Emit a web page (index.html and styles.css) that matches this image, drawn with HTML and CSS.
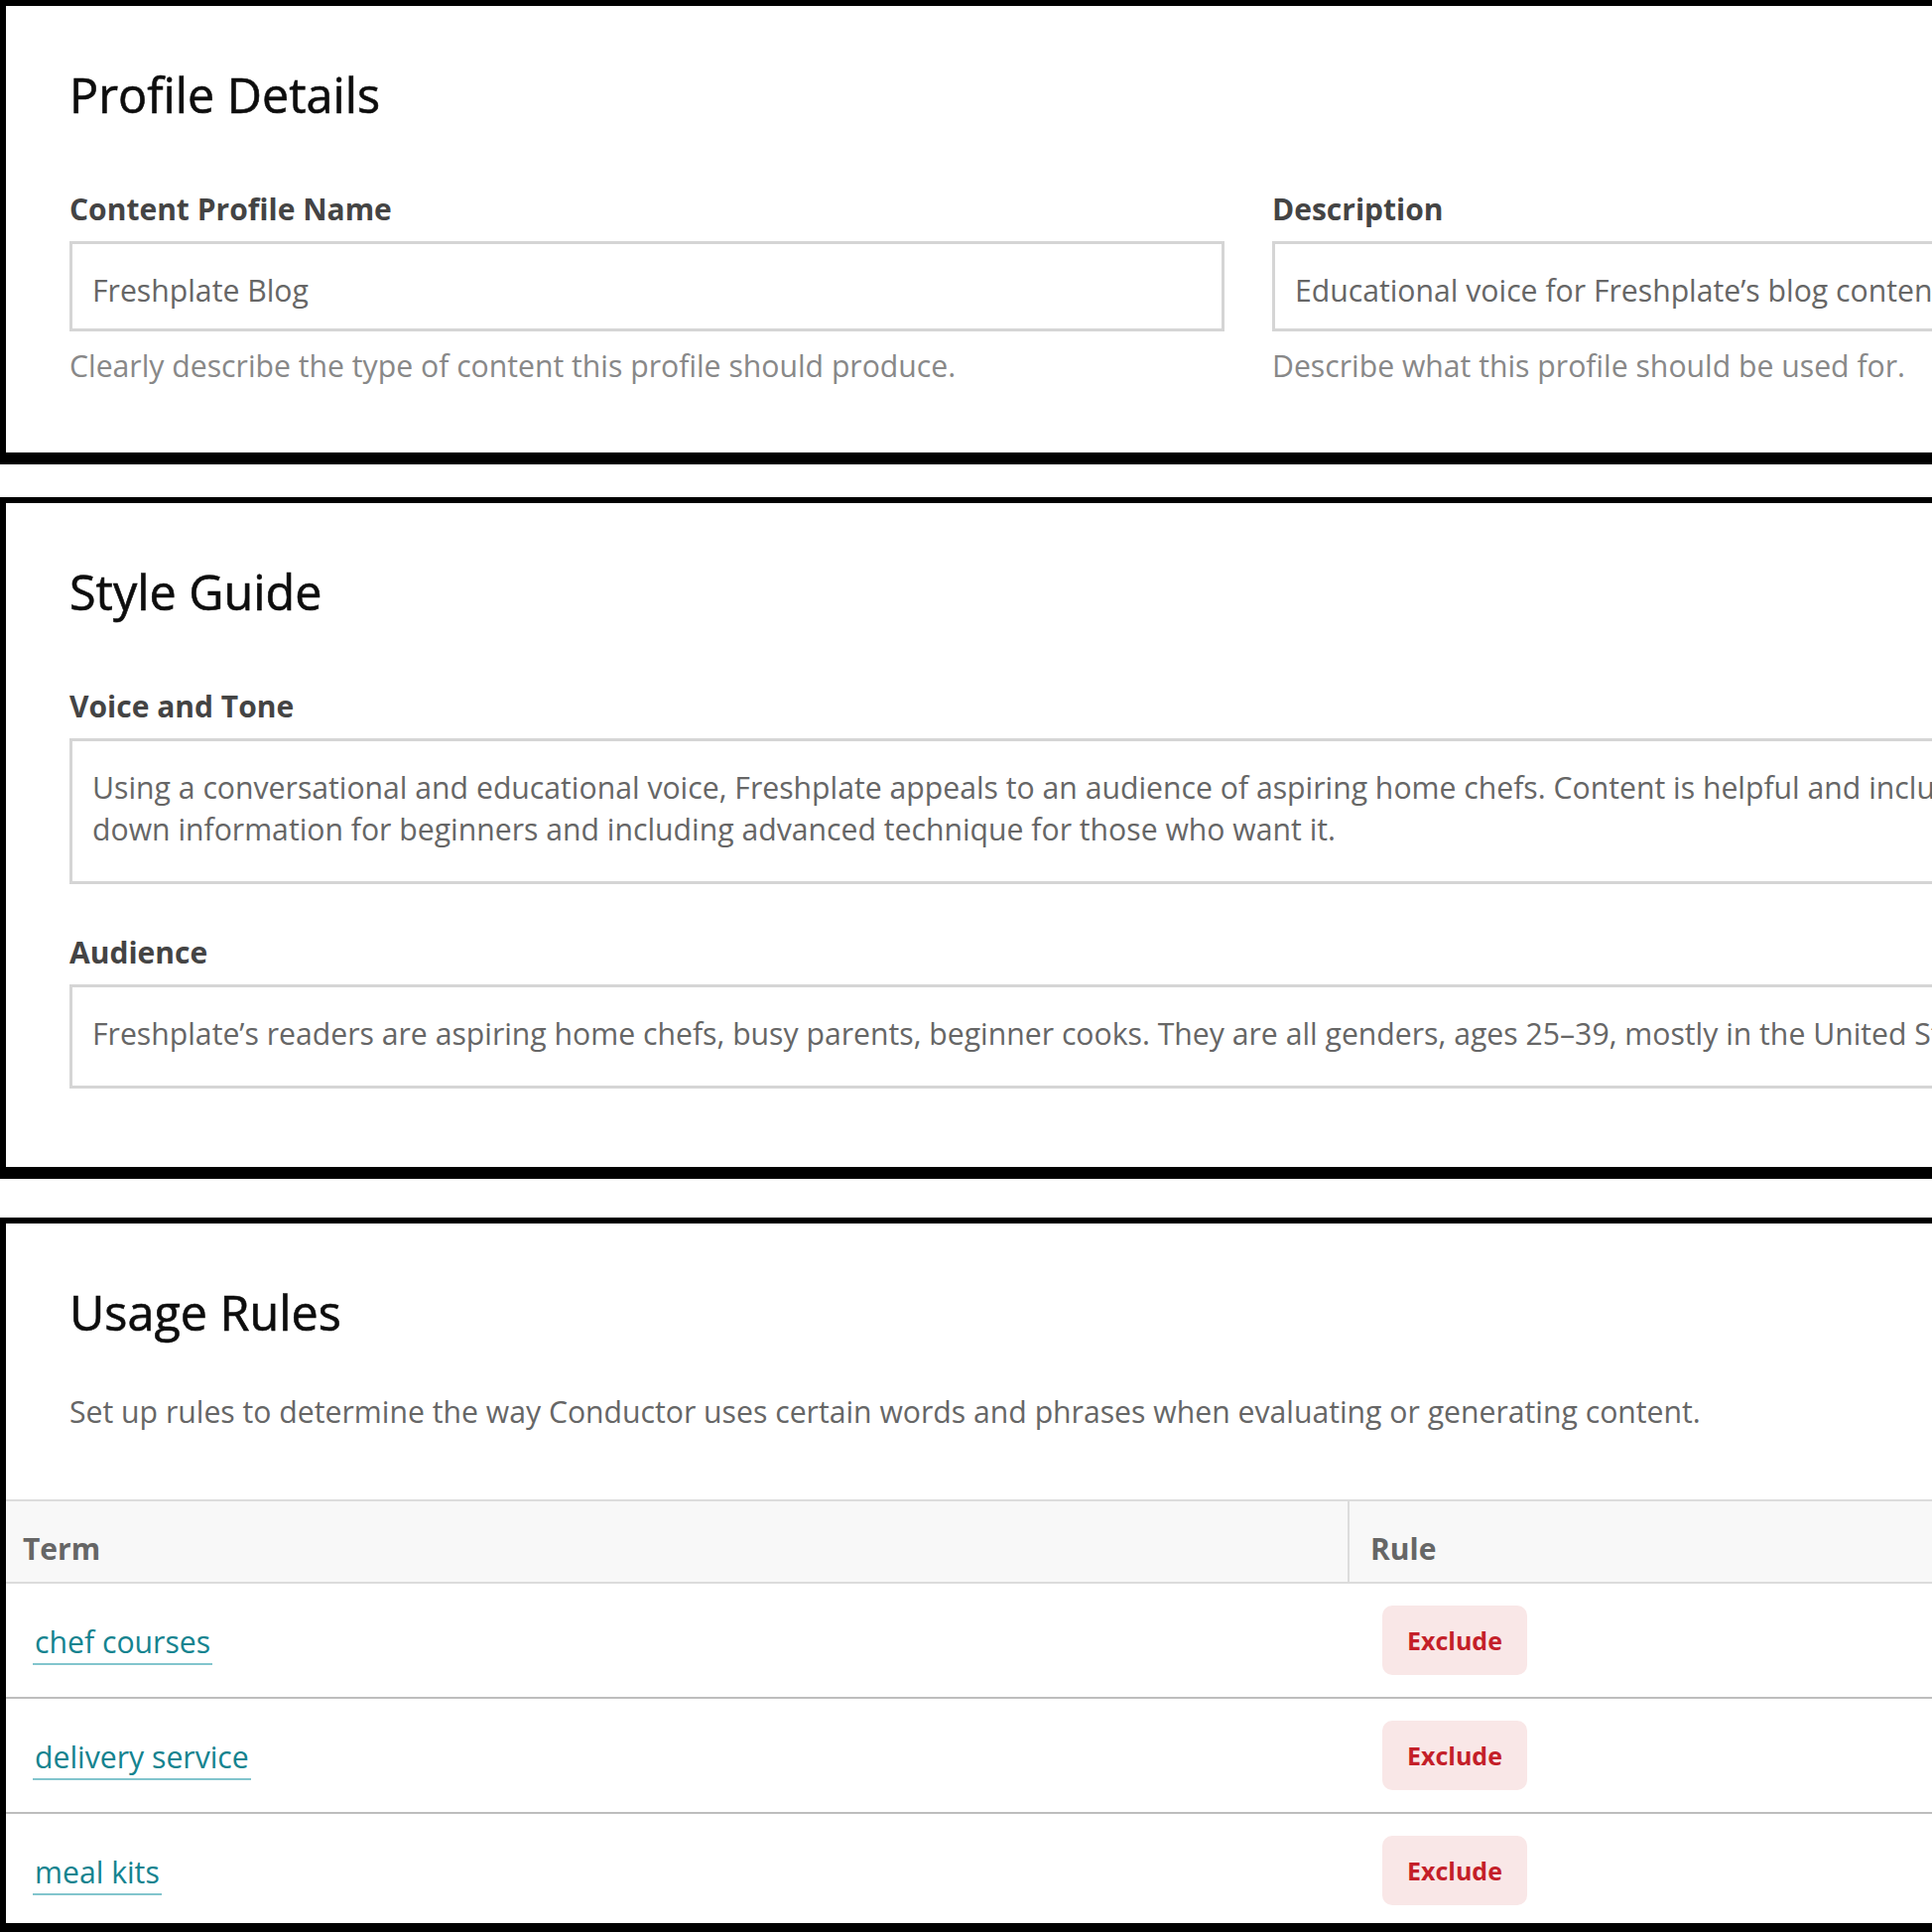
FILE: index.html
```html
<!DOCTYPE html>
<html lang="en">
<head>
<meta charset="utf-8">
<title>Content Profile</title>
<link rel="stylesheet" href="styles.css">
</head>
<body>
<div class="page">
  <section class="card card-profile">
    <div class="card-body">
      <h2 class="card-title">Profile Details</h2>
      <div class="field-row">
        <div class="field">
          <label class="field-label">Content Profile Name</label>
          <div class="input">Freshplate Blog</div>
          <p class="help">Clearly describe the type of content this profile should produce.</p>
        </div>
        <div class="field">
          <label class="field-label">Description</label>
          <div class="input">Educational voice for Freshplate’s blog content.</div>
          <p class="help">Describe what this profile should be used for.</p>
        </div>
      </div>
    </div>
  </section>

  <section class="card card-style">
    <div class="card-body">
      <h2 class="card-title">Style Guide</h2>
      <div class="stack">
        <div class="field">
          <label class="field-label">Voice and Tone</label>
          <div class="input textarea">Using a conversational and educational voice, Freshplate appeals to an audience of aspiring home chefs. Content is helpful and inclusive, breaking<br>down information for beginners and including advanced technique for those who want it.</div>
        </div>
        <div class="field">
          <label class="field-label">Audience</label>
          <div class="input textarea">Freshplate’s readers are aspiring home chefs, busy parents, beginner cooks. They are all genders, ages 25–39, mostly in the United States.</div>
        </div>
      </div>
    </div>
  </section>

  <section class="card card-usage">
    <div class="card-body">
      <h2 class="card-title">Usage Rules</h2>
      <p class="intro">Set up rules to determine the way Conductor uses certain words and phrases when evaluating or generating content.</p>
    </div>
    <div class="table">
      <div class="th th-term">Term</div>
      <div class="th th-rule">Rule</div>

      <div class="td td-term"><a class="term-link" href="#">chef courses</a></div>
      <div class="td td-rule"><span class="badge">Exclude</span></div>

      <div class="td td-term"><a class="term-link" href="#">delivery service</a></div>
      <div class="td td-rule"><span class="badge">Exclude</span></div>

      <div class="td td-term"><a class="term-link" href="#">meal kits</a></div>
      <div class="td td-rule"><span class="badge">Exclude</span></div>
    </div>
  </section>
</div>
</body>
</html>
```

FILE: styles.css
```css
html, body {
  margin: 0;
  padding: 0;
  background: #fff;
  overflow: hidden;
}

body {
  width: 1947px;
  height: 1947px;
  font-family: "Open Sans", "Noto Sans", sans-serif;
}

.page {
  width: 2516px;
}

.card {
  background: #fff;
  border: 6px solid #000;
  border-bottom-width: 12px;
}

.card-profile { margin-bottom: 33px; }
.card-style { margin-bottom: 39px; }

.card-usage {
  height: 705px;
  overflow: hidden;
}

.card-body {
  padding: 57px 64px 0;
}

.card-profile .card-body { padding-bottom: 66px; }
.card-style .card-body { padding-bottom: 79px; }

.card-title {
  margin: 0;
  font-size: 48.5px;
  line-height: 64px;
  font-weight: 400;
  color: #0d0d0d;
  -webkit-text-stroke: 0.6px #0d0d0d;
}

.field-row {
  display: grid;
  grid-template-columns: 1164px 1164px;
  column-gap: 48px;
  margin-top: 64px;
}

.stack {
  margin-top: 64px;
}

.stack .field + .field {
  margin-top: 49px;
}

.field-label {
  display: block;
  margin-bottom: 12px;
  font-size: 30px;
  line-height: 40px;
  font-weight: 700;
  color: #444;
}

.input {
  border: 3px solid #d5d5d5;
  padding: 26px 20px 17px;
  font-size: 30.2px;
  line-height: 42px;
  color: #666;
  white-space: nowrap;
  overflow: hidden;
}

.textarea {
  padding-bottom: 31px;
}

.help {
  margin: 14px 0 0;
  font-size: 30.2px;
  line-height: 42px;
  color: #888;
  white-space: nowrap;
}

.intro {
  margin: 48px 0 0;
  font-size: 30.2px;
  line-height: 42px;
  color: #666;
  white-space: nowrap;
}

.table {
  display: grid;
  grid-template-columns: 1354px 1fr;
  margin-top: 67px;
}

.th {
  background: #f8f8f8;
  border-top: 2px solid #dcdcdc;
  border-bottom: 2px solid #dcdcdc;
  padding: 28px 17px 13px;
  font-size: 30px;
  line-height: 40px;
  font-weight: 700;
  color: #666;
}

.th-term {
  border-right: 2px solid #dcdcdc;
}

.th-rule {
  padding-left: 21px;
}

.td {
  height: 114px;
  border-bottom: 2px solid #bdbdbd;
  display: flex;
  align-items: center;
}

.td-term {
  padding-left: 27px;
  padding-top: 6px;
  height: 108px;
}

.td-rule {
  padding-left: 33px;
}

.term-link {
  display: inline-block;
  padding: 0 2px;
  font-size: 30.2px;
  line-height: 42px;
  color: #14838f;
  text-decoration: none;
  border-bottom: 2px solid #82c5cd;
}

.badge {
  display: inline-block;
  height: 70px;
  line-height: 70px;
  padding: 0 25px;
  border-radius: 10px;
  background: #f9e7e7;
  color: #c41f29;
  font-size: 25px;
  font-weight: 700;
}
```
